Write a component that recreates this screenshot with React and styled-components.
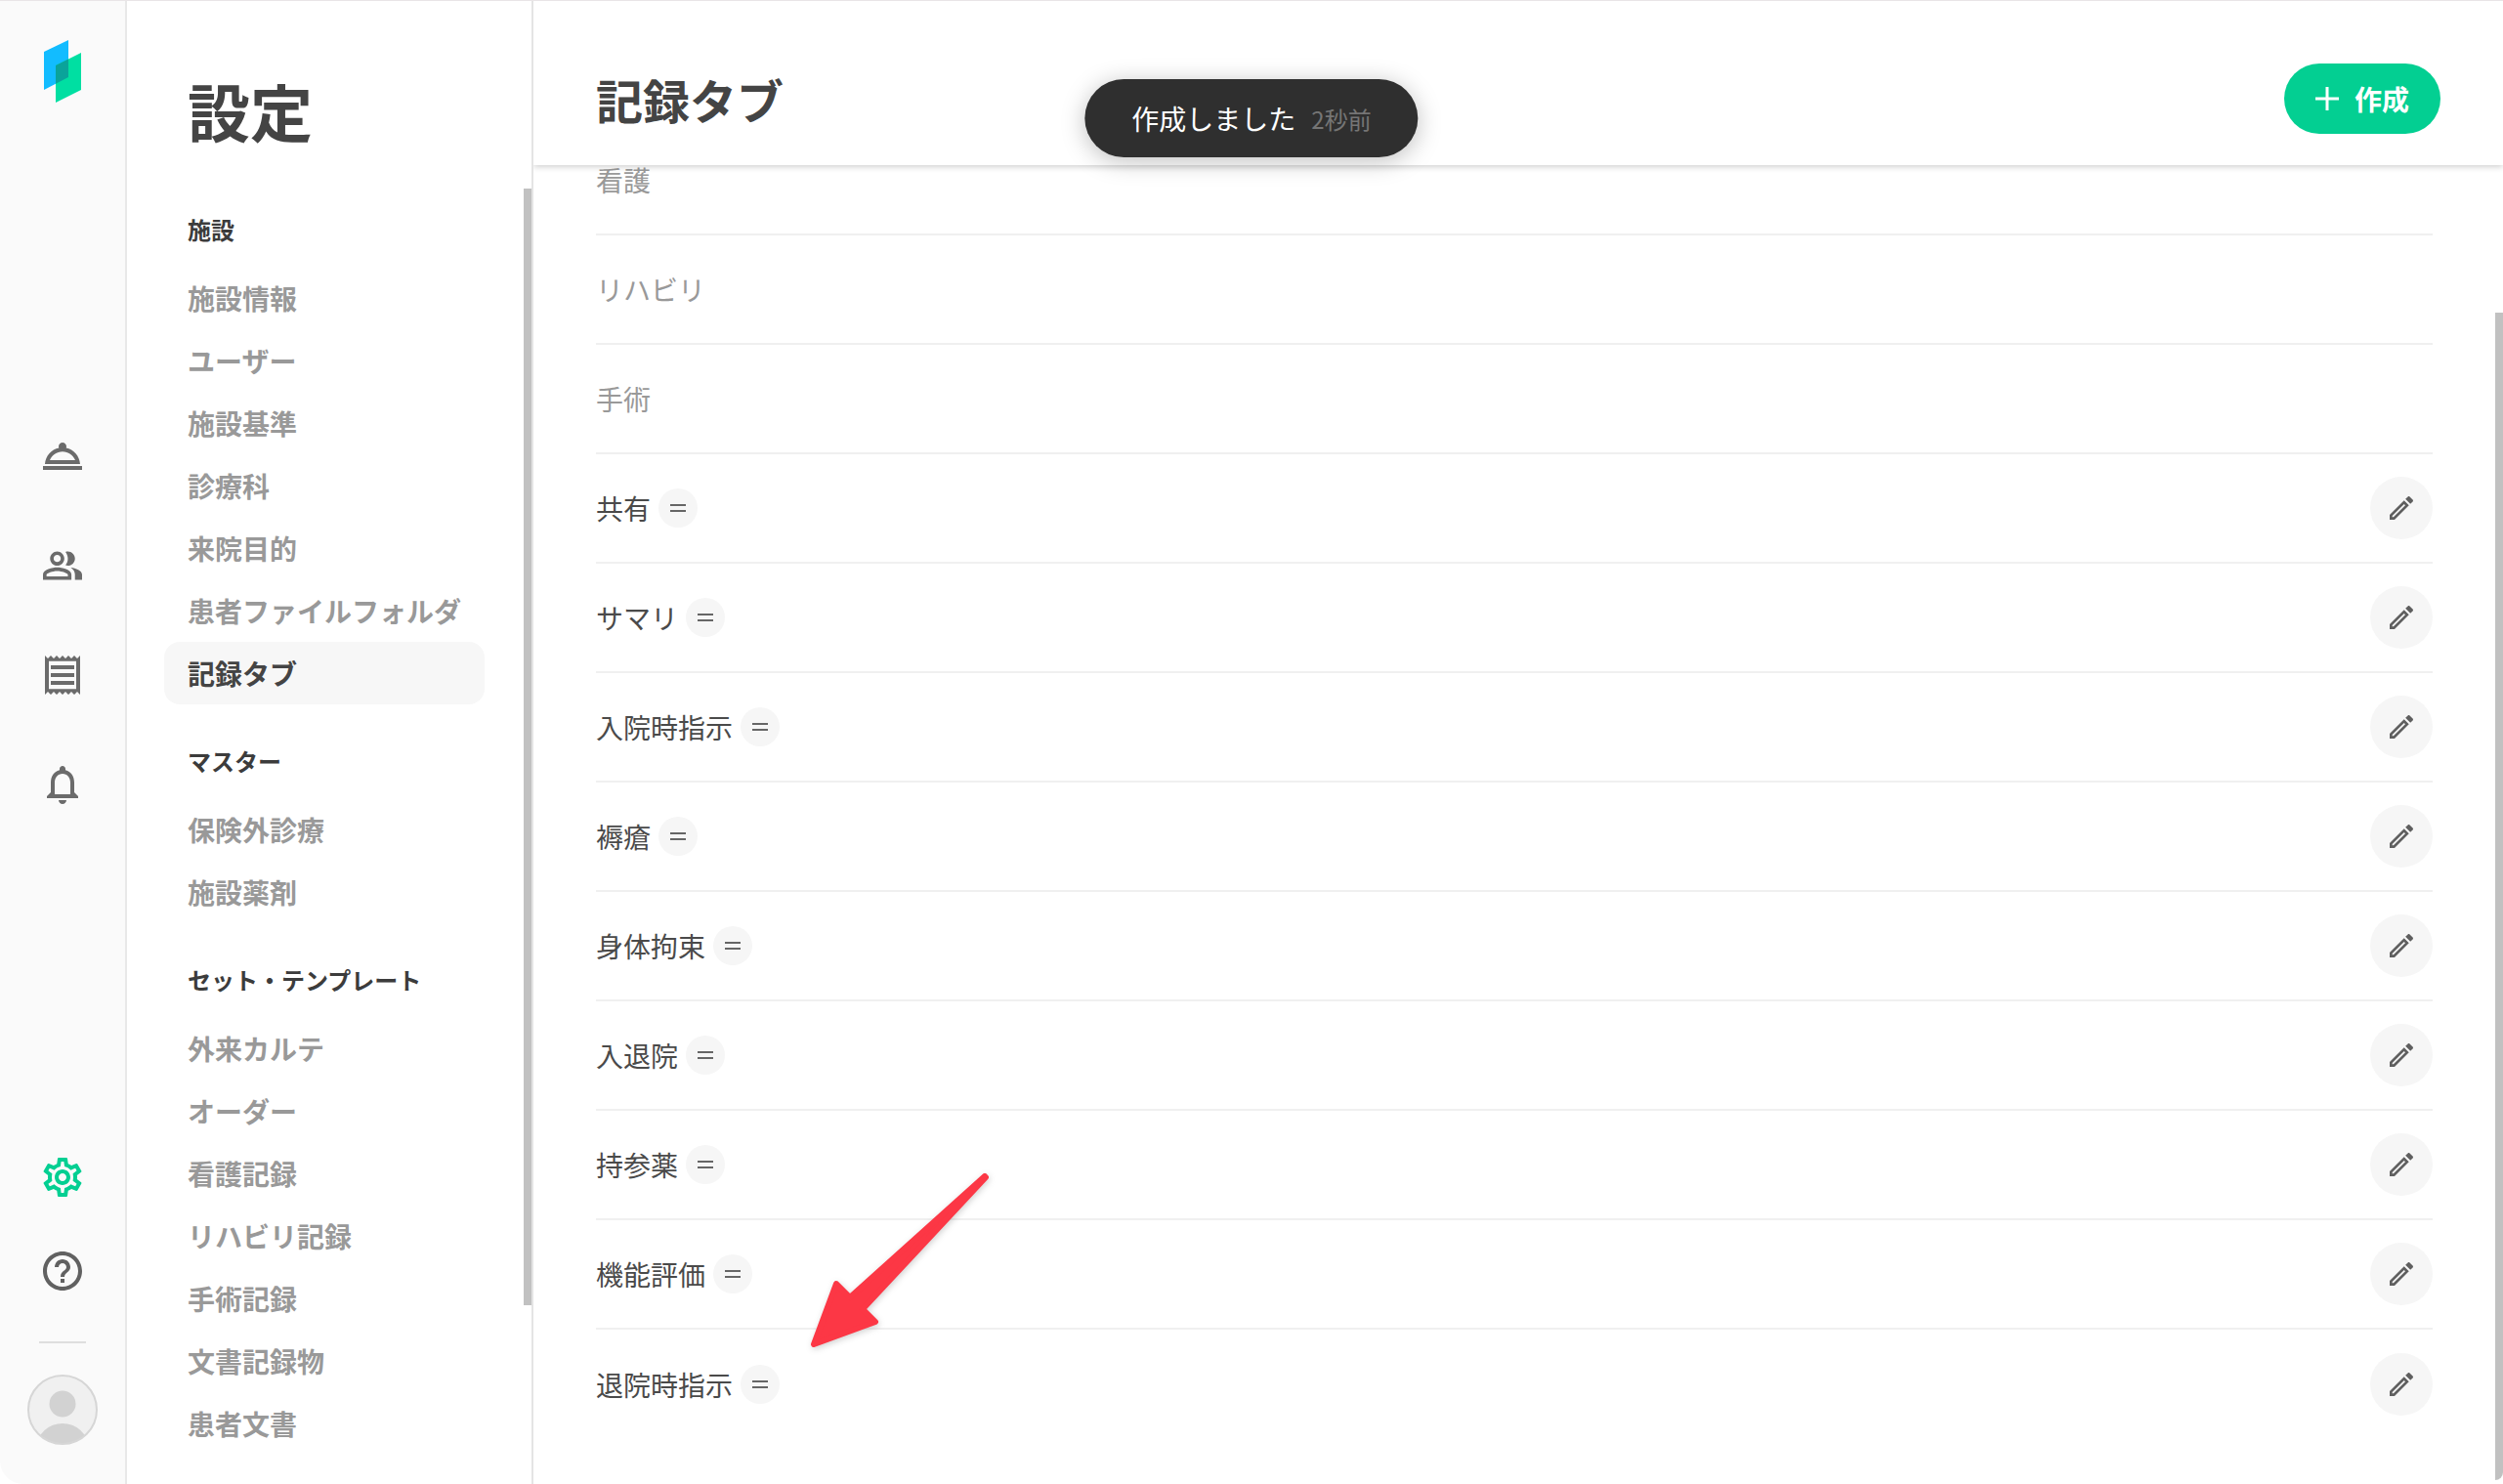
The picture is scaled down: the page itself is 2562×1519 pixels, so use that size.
import styled, { createGlobalStyle } from 'styled-components';

const GlobalStyle = createGlobalStyle`
  html, body {
    margin: 0;
    padding: 0;
    height: 100%;
    overflow: hidden;
    background: #fff;
    font-family: 'Noto Sans CJK JP', 'Noto Sans', sans-serif;
    color: #4a4a4a;
  }
  * {
    box-sizing: border-box;
  }
`;

const Page = styled.div`
  position: relative;
  display: flex;
  height: 1519px;
  border-top: 1px solid #e9e5e7;
  overflow: hidden;
`;

const Rail = styled.nav`
  flex: 0 0 130px;
  display: flex;
  flex-direction: column;
  align-items: center;
  padding: 40px 0 40px;
  background: #fafafa;
  border-right: 2px solid #e8e8e8;
  border-bottom-left-radius: 24px;
`;

const Logo = styled.svg`
  display: block;
  width: 38px;
  height: 64px;
  margin-bottom: 338px;
`;

const RailGroup = styled.div`
  display: flex;
  flex-direction: column;
  align-items: center;
  gap: ${(p) => p.$gap}px;
`;

const RailBottom = styled.div`
  margin-top: auto;
  display: flex;
  flex-direction: column;
  align-items: center;
`;

const RailIcon = styled.svg`
  display: block;
  width: 48px;
  height: 48px;
  fill: ${(p) => p.$color || '#6b6b6b'};
`;

const RailRule = styled.div`
  width: 48px;
  height: 2px;
  margin: 48px 0 32px;
  background: #dedede;
`;

const Avatar = styled.svg`
  display: block;
  width: 72px;
  height: 72px;
`;

const Sidebar = styled.aside`
  position: relative;
  flex: 0 0 416px;
  padding: 0 48px 0 38px;
  border-right: 2px solid #e4e4e4;
  overflow: hidden;
`;

const PageTitle = styled.h1`
  margin: 0;
  padding: 65px 0 0 24px;
  height: 214px;
  font-size: 64px;
  line-height: 92px;
  font-weight: 700;
  color: #444;
`;

const NavGroup = styled.div`
  margin-bottom: 38px;
`;

const NavHeading = styled.div`
  height: 40px;
  margin-bottom: 18px;
  padding-left: 24px;
  font-size: 24px;
  line-height: 40px;
  font-weight: 700;
  color: #3c3c3c;
`;

const NavItem = styled.div`
  height: 64px;
  padding-left: 24px;
  font-size: 28px;
  line-height: 64px;
  font-weight: 700;
  border-radius: 16px;
  color: ${(p) => (p.$active ? '#444' : '#999')};
  background: ${(p) => (p.$active ? '#f7f7f7' : 'transparent')};
`;

const ScrollThumb = styled.div`
  position: absolute;
  right: 0;
  top: ${(p) => p.$top}px;
  width: 8px;
  height: ${(p) => p.$height}px;
  background: #c1c1c1;
  border-bottom-right-radius: ${(p) => p.$radius || 0}px;
`;

const Main = styled.main`
  position: relative;
  flex: 1;
  min-width: 0;
  overflow: hidden;
`;

const MainHeader = styled.header`
  position: relative;
  z-index: 2;
  display: flex;
  align-items: center;
  justify-content: space-between;
  height: 168px;
  padding: 32px 64px 0;
  background: #fff;
  box-shadow: 0 2px 6px rgba(0, 0, 0, 0.18);
`;

const MainTitle = styled.h2`
  margin: 0;
  font-size: 48px;
  line-height: 64px;
  font-weight: 700;
  color: #444;
`;

const CreateButton = styled.button`
  display: flex;
  align-items: center;
  gap: 16px;
  height: 72px;
  width: 160px;
  padding: 0 0 0 32px;
  border: 0;
  border-radius: 36px;
  background: #03cf92;
  color: #fff;
  font-family: inherit;
  font-size: 28px;
  font-weight: 700;
  line-height: 72px;
`;

const PlusIcon = styled.svg`
  display: block;
  width: 24px;
  height: 24px;
  stroke: #fff;
  stroke-width: 3;
  fill: none;
`;

const TabList = styled.div`
  margin-top: -40px;
  padding: 0 72px 0 64px;
`;

const TabRow = styled.div`
  display: flex;
  align-items: center;
  height: 112px;
  border-bottom: ${(p) => (p.$last ? '0' : '2px solid #f0f0f0')};
  font-size: 28px;
  line-height: 40px;
  color: ${(p) => (p.$muted ? '#999' : '#4a4a4a')};
`;

const DragHandle = styled.span`
  display: flex;
  flex-direction: column;
  align-items: center;
  justify-content: center;
  gap: 4px;
  width: 40px;
  height: 40px;
  margin-left: 8px;
  border-radius: 50%;
  background: #f6f6f6;

  &::before,
  &::after {
    content: '';
    width: 16px;
    height: 2px;
    background: #666;
  }
`;

const EditButton = styled.button`
  display: flex;
  align-items: center;
  justify-content: center;
  width: 64px;
  height: 64px;
  margin-left: auto;
  padding: 0;
  border: 0;
  border-radius: 50%;
  background: #f6f6f6;
`;

const PencilIcon = styled.svg`
  display: block;
  width: 32px;
  height: 32px;
  fill: #5f5f5f;
`;

const Toast = styled.div`
  position: absolute;
  z-index: 5;
  left: 50%;
  top: 80px;
  transform: translateX(-50%);
  display: flex;
  align-items: center;
  gap: 16px;
  height: 80px;
  padding: 0 48px;
  border-radius: 40px;
  background: #2f2f2f;
  box-shadow: 0 4px 24px rgba(0, 0, 0, 0.25);
  color: #fff;
  font-size: 28px;
  white-space: nowrap;
`;

const ToastTime = styled.span`
  font-size: 24px;
  color: #757575;
`;

const ArrowOverlay = styled.svg`
  position: absolute;
  z-index: 6;
  left: 810px;
  top: 1180px;
  width: 220px;
  height: 220px;
  overflow: visible;
  filter: drop-shadow(1px 2px 3px rgba(0, 0, 0, 0.18));
`;

const icons = {
  service:
    'M18.98 17H2v2h20v-2zM21 16c-.27-4.07-3.25-7.4-7.16-8.21.1-.24.16-.51.16-.79 0-1.1-.9-2-2-2s-2 .9-2 2c0 .28.06.55.16.79C6.25 8.6 3.27 11.93 3 16h18zm-9-6.42c2.95 0 5.47 1.83 6.5 4.42h-13c1.03-2.59 3.55-4.42 6.5-4.42z',
  people:
    'M16.67 13.13C18.04 14.06 19 15.32 19 17v3h4v-3c0-2.18-3.57-3.47-6.33-3.87zM15 12c2.21 0 4-1.79 4-4s-1.79-4-4-4c-.47 0-.91.1-1.33.24C14.5 5.27 15 6.58 15 8s-.5 2.73-1.33 3.76c.42.14.86.24 1.33.24zM9 12c2.21 0 4-1.79 4-4s-1.79-4-4-4-4 1.79-4 4 1.79 4 4 4zm0-6c1.1 0 2 .9 2 2s-.9 2-2 2-2-.9-2-2 .9-2 2-2zM9 13c-2.67 0-8 1.34-8 4v3h16v-3c0-2.66-5.33-4-8-4zm6 5H3v-.99C3.2 16.29 6.3 15 9 15s5.8 1.29 6 2v1z',
  receipt:
    'M19.5 3.5L18 2l-1.5 1.5L15 2l-1.5 1.5L12 2l-1.5 1.5L9 2 7.5 3.5 6 2 4.5 3.5 3 2v20l1.5-1.5L6 22l1.5-1.5L9 22l1.5-1.5L12 22l1.5-1.5L15 22l1.5-1.5L18 22l1.5-1.5L21 22V2l-1.5 1.5zM19 19.09H5V4.91h14v14.18zM6 15h12v2H6zm0-4h12v2H6zm0-4h12v2H6z',
  bell:
    'M12 22c1.1 0 2-.9 2-2h-4c0 1.1.9 2 2 2zm6-6v-5c0-3.07-1.63-5.64-4.5-6.32V4c0-.83-.67-1.5-1.5-1.5s-1.5.67-1.5 1.5v.68C7.64 5.36 6 7.92 6 11v5l-2 2v1h16v-1l-2-2zm-2 1H8v-6c0-2.48 1.51-4.5 4-4.5s4 2.02 4 4.5v6z',
  settings:
    'M19.43 12.98c.04-.32.07-.64.07-.98 0-.34-.03-.66-.07-.98l2.11-1.65c.19-.15.24-.42.12-.64l-2-3.46c-.09-.16-.26-.25-.44-.25-.06 0-.12.01-.17.03l-2.49 1c-.52-.4-1.08-.73-1.69-.98l-.38-2.65C14.46 2.18 14.25 2 14 2h-4c-.25 0-.46.18-.49.42l-.38 2.65c-.61.25-1.17.59-1.69.98l-2.49-1c-.06-.02-.12-.03-.18-.03-.17 0-.34.09-.43.25l-2 3.46c-.13.22-.07.49.12.64l2.11 1.65c-.04.32-.07.65-.07.98 0 .33.03.66.07.98l-2.11 1.65c-.19.15-.24.42-.12.64l2 3.46c.09.16.26.25.44.25.06 0 .12-.01.17-.03l2.49-1c.52.4 1.08.73 1.69.98l.38 2.65c.03.24.24.42.49.42h4c.25 0 .46-.18.49-.42l.38-2.65c.61-.25 1.17-.59 1.69-.98l2.49 1c.06.02.12.03.18.03.17 0 .34-.09.43-.25l2-3.46c.12-.22.07-.49-.12-.64l-2.11-1.65zm-1.98-1.71c.04.31.05.52.05.73 0 .21-.02.43-.05.73l-.14 1.13.89.7 1.08.84-.7 1.21-1.27-.51-1.04-.42-.9.68c-.43.32-.84.56-1.25.73l-1.06.43-.16 1.13-.2 1.35h-1.4l-.19-1.35-.16-1.13-1.06-.43c-.43-.18-.83-.41-1.23-.71l-.91-.7-1.06.43-1.27.51-.7-1.21 1.08-.84.89-.7-.14-1.13c-.03-.31-.05-.54-.05-.74s.02-.43.05-.73l.14-1.13-.89-.7-1.08-.84.7-1.21 1.27.51 1.04.42.9-.68c.43-.32.84-.56 1.25-.73l1.06-.43.16-1.13.2-1.35h1.39l.19 1.35.16 1.13 1.06.43c.43.18.83.41 1.23.71l.91.7 1.06-.43 1.27-.51.7 1.21-1.07.85-.89.7.14 1.13zM12 8c-2.21 0-4 1.79-4 4s1.79 4 4 4 4-1.79 4-4-1.79-4-4-4zm0 6c-1.1 0-2-.9-2-2s.9-2 2-2 2 .9 2 2-.9 2-2 2z',
  help:
    'M11 18h2v-2h-2v2zm1-16C6.48 2 2 6.48 2 12s4.48 10 10 10 10-4.48 10-10S17.52 2 12 2zm0 18c-4.41 0-8-3.59-8-8s3.59-8 8-8 8 3.59 8 8-3.59 8-8 8zm0-14c-2.21 0-4 1.79-4 4h2c0-1.1.9-2 2-2s2 .9 2 2c0 2-3 1.75-3 5h2c0-2.25 3-2.5 3-5 0-2.21-1.79-4-4-4z',
};

const navGroups = [
  {
    heading: '施設',
    items: ['施設情報', 'ユーザー', '施設基準', '診療科', '来院目的', '患者ファイルフォルダ', '記録タブ'],
  },
  { heading: 'マスター', items: ['保険外診療', '施設薬剤'] },
  {
    heading: 'セット・テンプレート',
    items: ['外来カルテ', 'オーダー', '看護記録', 'リハビリ記録', '手術記録', '文書記録物', '患者文書'],
  },
];

const lockedTabs = ['看護', 'リハビリ', '手術'];
const customTabs = ['共有', 'サマリ', '入院時指示', '褥瘡', '身体拘束', '入退院', '持参薬', '機能評価', '退院時指示'];

// the people glyph runs wider than the others, so it gets a larger viewBox
const Icon = ({ name, color, box = '0 0 24 24' }) => (
  <RailIcon viewBox={box} $color={color}>
    <path d={icons[name]} />
  </RailIcon>
);

const App = () => {
  return (
    <>
      <GlobalStyle />
      <Page>
        <Rail>
          <Logo viewBox="0 0 38 64">
            <polygon points="0,12 25,0 25,38 0,51" fill="#12bcff" />
            <polygon points="12,26 38,13 38,51 12,64" fill="#00dfa2" />
            <polygon points="12,26 25,19.5 25,38 12,44.8" fill="#0aa39a" />
          </Logo>
          <RailGroup $gap={64}>
            <Icon name="service" />
            <Icon name="people" box="-1.2 -1.2 26.4 26.4" />
            <Icon name="receipt" />
            <Icon name="bell" />
          </RailGroup>
          <RailBottom>
            <RailGroup $gap={48}>
              <Icon name="settings" color="#03cf92" />
              <Icon name="help" color="#616161" />
            </RailGroup>
            <RailRule />
            <Avatar viewBox="0 0 72 72">
              <defs>
                <clipPath id="avatar-clip">
                  <circle cx="36" cy="36" r="35" />
                </clipPath>
              </defs>
              <circle cx="36" cy="36" r="35" fill="#f0f0f0" />
              <g clipPath="url(#avatar-clip)" fill="#d2d2d2">
                <circle cx="36" cy="30" r="13.5" />
                <ellipse cx="36" cy="74" rx="26" ry="24" />
              </g>
              <circle cx="36" cy="36" r="35" fill="none" stroke="#d6d6d6" strokeWidth="2" />
            </Avatar>
          </RailBottom>
        </Rail>

        <Sidebar>
          <PageTitle>設定</PageTitle>
          {navGroups.map((group) => (
            <NavGroup key={group.heading}>
              <NavHeading>{group.heading}</NavHeading>
              {group.items.map((item) => (
                <NavItem key={item} $active={item === '記録タブ'}>
                  {item}
                </NavItem>
              ))}
            </NavGroup>
          ))}
          <ScrollThumb $top={192} $height={1143} />
        </Sidebar>

        <Main>
          <MainHeader>
            <MainTitle>記録タブ</MainTitle>
            <CreateButton>
              <PlusIcon viewBox="0 0 24 24">
                <path d="M12 0v24M0 12h24" />
              </PlusIcon>
              作成
            </CreateButton>
          </MainHeader>
          <TabList>
            {lockedTabs.map((tab) => (
              <TabRow key={tab} $muted>
                {tab}
              </TabRow>
            ))}
            {customTabs.map((tab, i) => (
              <TabRow key={tab} $last={i === customTabs.length - 1}>
                {tab}
                <DragHandle />
                <EditButton>
                  <PencilIcon viewBox="0 0 24 24">
                    <path d="M14.06 9.02l.92.92L5.92 19H5v-.92l9.06-9.06M17.66 3c-.25 0-.51.1-.7.29l-1.83 1.83 3.75 3.75 1.83-1.83c.39-.39.39-1.02 0-1.41l-2.34-2.34c-.2-.2-.45-.29-.71-.29zm-3.6 3.19L3 17.25V21h3.75L17.81 9.94l-3.75-3.75z" />
                  </PencilIcon>
                </EditButton>
              </TabRow>
            ))}
          </TabList>
          <ScrollThumb $top={319} $height={1195} $radius={14} />
        </Main>

        <Toast>
          作成しました
          <ToastTime>2秒前</ToastTime>
        </Toast>

        <ArrowOverlay viewBox="810 1180 220 220">
          <polygon
            points="1008,1203 1009,1204 883,1339 896,1352 833,1375 856,1313 870,1327"
            fill="#fc3745"
            stroke="#fc3745"
            strokeWidth="6"
            strokeLinejoin="round"
          />
        </ArrowOverlay>
      </Page>
    </>
  );
};

export default App;
